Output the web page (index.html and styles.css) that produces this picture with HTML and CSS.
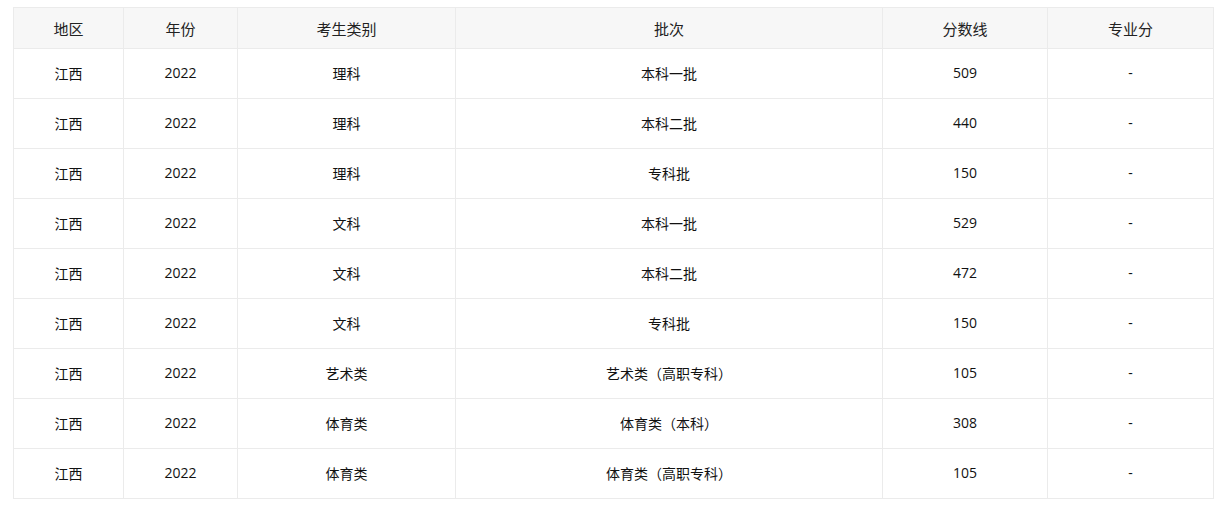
FILE: index.html
```html
<!DOCTYPE html>
<html lang="zh">
<head>
<meta charset="utf-8">
<link rel="stylesheet" href="styles.css">
</head>
<body>
<div class="wrap">
<table class="score-table">
  <colgroup>
    <col class="c1"><col class="c2"><col class="c3"><col class="c4"><col class="c5"><col class="c6">
  </colgroup>
  <thead>
    <tr><th>地区</th><th>年份</th><th>考生类别</th><th>批次</th><th>分数线</th><th>专业分</th></tr>
  </thead>
  <tbody>
    <tr><td>江西</td><td>2022</td><td>理科</td><td>本科一批</td><td>509</td><td>-</td></tr>
    <tr><td>江西</td><td>2022</td><td>理科</td><td>本科二批</td><td>440</td><td>-</td></tr>
    <tr><td>江西</td><td>2022</td><td>理科</td><td>专科批</td><td>150</td><td>-</td></tr>
    <tr><td>江西</td><td>2022</td><td>文科</td><td>本科一批</td><td>529</td><td>-</td></tr>
    <tr><td>江西</td><td>2022</td><td>文科</td><td>本科二批</td><td>472</td><td>-</td></tr>
    <tr><td>江西</td><td>2022</td><td>文科</td><td>专科批</td><td>150</td><td>-</td></tr>
    <tr><td>江西</td><td>2022</td><td>艺术类</td><td>艺术类（高职专科）</td><td>105</td><td>-</td></tr>
    <tr><td>江西</td><td>2022</td><td>体育类</td><td>体育类（本科）</td><td>308</td><td>-</td></tr>
    <tr><td>江西</td><td>2022</td><td>体育类</td><td>体育类（高职专科）</td><td>105</td><td>-</td></tr>
  </tbody>
</table>
</div>
</body>
</html>
```
FILE: styles.css
```css
html, body {
  margin: 0;
  padding: 0;
  background: #fff;
}
body {
  font-family: "Open Sans", "Noto Sans CJK SC", sans-serif;
  color: #111;
}
.wrap {
  padding: 7px 13px 0 13px;
}
.score-table {
  width: 1200px;
  border-collapse: collapse;
  table-layout: fixed;
}
.c1 { width: 110px; }
.c2 { width: 114px; }
.c3 { width: 218px; }
.c4 { width: 427px; }
.c5 { width: 165px; }
.c6 { width: 166px; }
.score-table th,
.score-table td {
  border: 1px solid #ebebeb;
  text-align: center;
  padding: 0;
  font-weight: normal;
}
.score-table th {
  height: 40px;
  background: #f7f7f7;
  font-size: 15px;
  color: #222;
}
.score-table td {
  height: 47px;
  padding-bottom: 2px;
  font-size: 14px;
}
```
